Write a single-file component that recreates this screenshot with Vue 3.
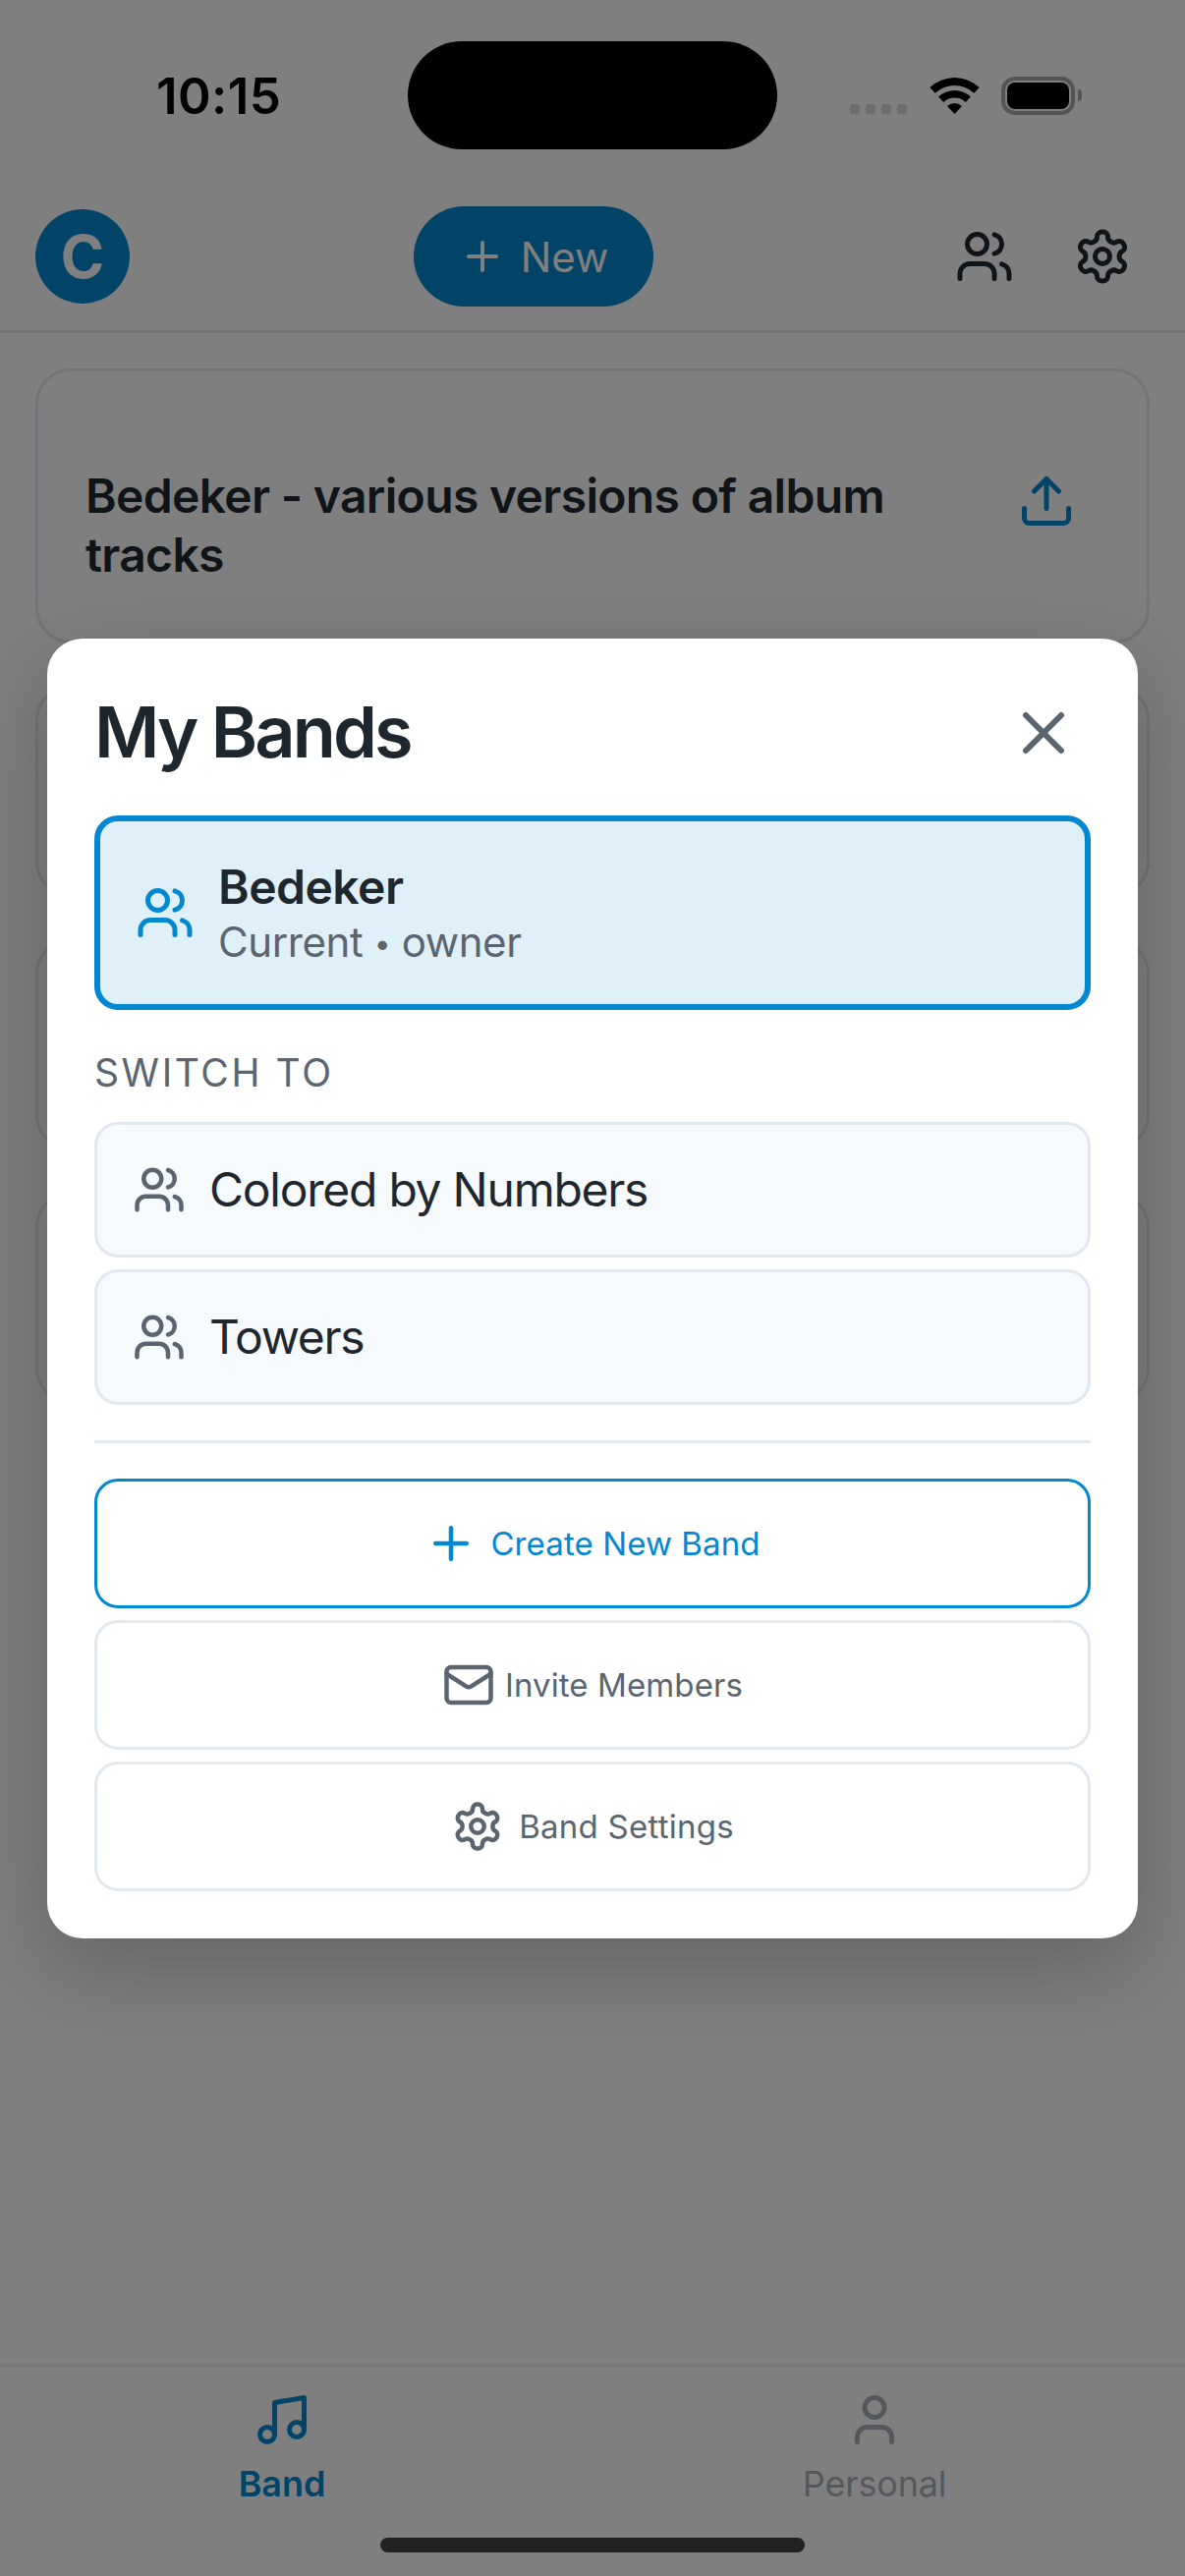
<script setup>
const otherBands = ['Colored by Numbers', 'Towers']
</script>

<template>
  <div class="screen">
    <div class="status-bar">
      <span class="time">10:15</span>
      <div class="island"></div>
      <div class="status-icons">
        <div class="signal">
          <i v-for="n in 4" :key="n"></i>
        </div>
        <svg class="wifi" viewBox="0 0 51 37" fill="#000">
          <path d="M0.3 10A37 37 0 0 1 50.7 10L45.3 15.8A29 29 0 0 0 5.7 15.8Z" />
          <path d="M9.1 19.5A24 24 0 0 1 41.9 19.5L36.75 24.94A16.5 16.5 0 0 0 14.25 24.94Z" />
          <path d="M18 29A11 11 0 0 1 33 29L25.5 37Z" />
        </svg>
        <div class="battery"><div class="battery-level"></div></div>
        <div class="battery-nub"></div>
      </div>
    </div>

    <header class="top-bar">
      <div class="avatar">C</div>
      <button class="new-btn">
        <svg class="icon ic-48" viewBox="0 0 24 24"><path d="M5 12h14" /><path d="M12 5v14" /></svg>
        <span>New</span>
      </button>
      <div class="top-actions">
        <button class="icon-btn">
          <svg class="icon ic-60" viewBox="0 0 24 24">
            <path d="M16 21v-2a4 4 0 0 0-4-4H6a4 4 0 0 0-4 4v2" />
            <circle cx="9" cy="7" r="4" />
            <path d="M22 21v-2a4 4 0 0 0-3-3.87" />
            <path d="M16 3.13a4 4 0 0 1 0 7.75" />
          </svg>
        </button>
        <button class="icon-btn">
          <svg class="icon ic-60" viewBox="0 0 24 24">
            <path d="M12.22 2h-.44a2 2 0 0 0-2 2v.18a2 2 0 0 1-1 1.73l-.43.25a2 2 0 0 1-2 0l-.15-.08a2 2 0 0 0-2.73.73l-.22.38a2 2 0 0 0 .73 2.73l.15.1a2 2 0 0 1 1 1.72v.51a2 2 0 0 1-1 1.74l-.15.09a2 2 0 0 0-.73 2.73l.22.38a2 2 0 0 0 2.73.73l.15-.08a2 2 0 0 1 2 0l.43.25a2 2 0 0 1 1 1.73V20a2 2 0 0 0 2 2h.44a2 2 0 0 0 2-2v-.18a2 2 0 0 1 1-1.73l.43-.25a2 2 0 0 1 2 0l.15.08a2 2 0 0 0 2.73-.73l.22-.39a2 2 0 0 0-.73-2.73l-.15-.08a2 2 0 0 1-1-1.74v-.5a2 2 0 0 1 1-1.74l.15-.09a2 2 0 0 0 .73-2.73l-.22-.38a2 2 0 0 0-2.73-.73l-.15.08a2 2 0 0 1-2 0l-.43-.25a2 2 0 0 1-1-1.73V4a2 2 0 0 0-2-2z" />
            <circle cx="12" cy="12" r="3" />
          </svg>
        </button>
      </div>
    </header>

    <main class="list">
      <div class="card card-first">
        <h2>Bedeker - various versions of album tracks</h2>
        <svg class="icon ic-60 upload" viewBox="0 0 24 24">
          <path d="M21 15v4a2 2 0 0 1-2 2H5a2 2 0 0 1-2-2v-4" />
          <polyline points="17 8 12 3 7 8" />
          <line x1="12" y1="3" x2="12" y2="15" />
        </svg>
      </div>
      <div class="card" v-for="n in 3" :key="n"></div>
    </main>

    <nav class="tab-bar">
      <div class="tab active">
        <svg class="icon ic-60" viewBox="0 0 24 24">
          <path d="M9 18V5l12-2v13" />
          <circle cx="6" cy="18" r="3" />
          <circle cx="18" cy="16" r="3" />
        </svg>
        <span>Band</span>
      </div>
      <div class="tab">
        <svg class="icon ic-60" viewBox="0 0 24 24">
          <path d="M19 21v-2a4 4 0 0 0-4-4H9a4 4 0 0 0-4 4v2" />
          <circle cx="12" cy="7" r="4" />
        </svg>
        <span>Personal</span>
      </div>
    </nav>

    <div class="overlay">
      <div class="modal">
        <div class="modal-head">
          <h1>My Bands</h1>
          <button class="close-btn">
            <svg class="icon ic-72" viewBox="0 0 24 24"><path d="M18 6 6 18" /><path d="m6 6 12 12" /></svg>
          </button>
        </div>

        <div class="current-band">
          <svg class="icon ic-60" viewBox="0 0 24 24">
            <path d="M16 21v-2a4 4 0 0 0-4-4H6a4 4 0 0 0-4 4v2" />
            <circle cx="9" cy="7" r="4" />
            <path d="M22 21v-2a4 4 0 0 0-3-3.87" />
            <path d="M16 3.13a4 4 0 0 1 0 7.75" />
          </svg>
          <div class="current-text">
            <strong>Bedeker</strong>
            <span>Current <b class="dot">•</b> owner</span>
          </div>
        </div>

        <p class="section-label">SWITCH TO</p>

        <div class="band-list">
          <div class="band-row" v-for="band in otherBands" :key="band">
            <svg class="icon ic-54" viewBox="0 0 24 24">
              <path d="M16 21v-2a4 4 0 0 0-4-4H6a4 4 0 0 0-4 4v2" />
              <circle cx="9" cy="7" r="4" />
              <path d="M22 21v-2a4 4 0 0 0-3-3.87" />
              <path d="M16 3.13a4 4 0 0 1 0 7.75" />
            </svg>
            <span>{{ band }}</span>
          </div>
        </div>

        <div class="divider"></div>

        <div class="actions">
          <button class="action primary">
            <svg class="icon ic-54" viewBox="0 0 24 24"><path d="M5 12h14" /><path d="M12 5v14" /></svg>
            <span>Create New Band</span>
          </button>
          <button class="action invite">
            <svg class="icon ic-54" viewBox="0 0 24 24">
              <path d="m22 7-8.97 5.7a1.94 1.94 0 0 1-2.06 0L2 7" />
              <rect x="2" y="4" width="20" height="16" rx="2" />
            </svg>
            <span>Invite Members</span>
          </button>
          <button class="action settings">
            <svg class="icon ic-54" viewBox="0 0 24 24">
              <path d="M12.22 2h-.44a2 2 0 0 0-2 2v.18a2 2 0 0 1-1 1.73l-.43.25a2 2 0 0 1-2 0l-.15-.08a2 2 0 0 0-2.73.73l-.22.38a2 2 0 0 0 .73 2.73l.15.1a2 2 0 0 1 1 1.72v.51a2 2 0 0 1-1 1.74l-.15.09a2 2 0 0 0-.73 2.73l.22.38a2 2 0 0 0 2.73.73l.15-.08a2 2 0 0 1 2 0l.43.25a2 2 0 0 1 1 1.73V20a2 2 0 0 0 2 2h.44a2 2 0 0 0 2-2v-.18a2 2 0 0 1 1-1.73l.43-.25a2 2 0 0 1 2 0l.15.08a2 2 0 0 0 2.73-.73l.22-.39a2 2 0 0 0-.73-2.73l-.15-.08a2 2 0 0 1-1-1.74v-.5a2 2 0 0 1 1-1.74l.15-.09a2 2 0 0 0 .73-2.73l-.22-.38a2 2 0 0 0-2.73-.73l-.15.08a2 2 0 0 1-2 0l-.43-.25a2 2 0 0 1-1-1.73V4a2 2 0 0 0-2-2z" />
              <circle cx="12" cy="12" r="3" />
            </svg>
            <span>Band Settings</span>
          </button>
        </div>
      </div>
    </div>

    <div class="home-indicator"></div>
  </div>
</template>

<style>
html,
body {
  margin: 0;
  background: #808080;
}
</style>

<style scoped>
.screen {
  position: relative;
  width: 1206px;
  height: 2622px;
  overflow: hidden;
  display: flex;
  flex-direction: column;
  background: #fff;
  font-family: Inter, 'Noto Sans', sans-serif;
  color: #1f2933;
}

button {
  border: none;
  background: none;
  padding: 0;
  font-family: inherit;
}

h1,
h2,
p {
  margin: 0;
}

.icon {
  flex-shrink: 0;
  fill: none;
  stroke: currentColor;
  stroke-width: 2;
  stroke-linecap: round;
  stroke-linejoin: round;
}

.ic-48 {
  width: 48px;
  height: 48px;
}

.ic-54 {
  width: 54px;
  height: 54px;
}

.ic-60 {
  width: 60px;
  height: 60px;
}

.ic-72 {
  width: 72px;
  height: 72px;
}

/* status bar sits above the dimming layer */
.status-bar {
  position: relative;
  z-index: 3;
  height: 186px;
  box-sizing: border-box;
  padding-top: 42px;
  display: grid;
  grid-template-columns: 1fr 376px 1fr;
  align-items: start;
}

.time {
  height: 110px;
  padding-left: 159px;
  display: flex;
  align-items: center;
  font-size: 51px;
  font-weight: 600;
  letter-spacing: 0.4px;
  color: #000;
}

.island {
  height: 110px;
  border-radius: 55px;
  background: #000;
}

.status-icons {
  height: 110px;
  padding-left: 74px;
  display: flex;
  align-items: center;
}

.signal {
  display: flex;
  gap: 6px;
  margin-top: 28px;
  margin-right: 23px;
}

.signal i {
  width: 10px;
  height: 10px;
  border-radius: 3px;
  background: #6c6c6c;
}

.wifi {
  width: 51px;
  height: 37px;
  margin-right: 22px;
}

.battery {
  width: 75px;
  height: 39px;
  box-sizing: border-box;
  border: 4px solid #555;
  border-radius: 14px;
  padding: 2px;
}

.battery-level {
  width: 100%;
  height: 100%;
  border-radius: 8px;
  background: #000;
}

.battery-nub {
  width: 4px;
  height: 12px;
  margin-left: 3px;
  border-radius: 0 4px 4px 0;
  background: #555;
}

.top-bar {
  height: 153px;
  box-sizing: border-box;
  padding: 0 36px;
  border-bottom: 3px solid #e5e7eb;
  display: flex;
  align-items: center;
  justify-content: space-between;
}

.avatar {
  width: 96px;
  height: 96px;
  border-radius: 50%;
  background: #0288d1;
  color: #fff;
  font-size: 60px;
  font-weight: 700;
  display: flex;
  align-items: center;
  justify-content: center;
}

.new-btn {
  width: 244px;
  height: 102px;
  border-radius: 51px;
  background: #0288d1;
  color: #fff;
  font-size: 42px;
  font-weight: 400;
  display: flex;
  align-items: center;
  justify-content: center;
  gap: 15px;
}

.top-actions {
  display: flex;
  gap: 24px;
}

.icon-btn {
  width: 96px;
  height: 96px;
  display: flex;
  align-items: center;
  justify-content: center;
  color: #1f2933;
}

.list {
  padding: 36px 36px 0;
  display: flex;
  flex-direction: column;
  gap: 42px;
}

.card {
  box-sizing: border-box;
  min-height: 216px;
  border: 3px solid #e2e8f0;
  border-radius: 36px;
}

.card-first {
  height: 280px;
  padding: 97px 48px 0;
  display: flex;
  justify-content: space-between;
  align-items: flex-start;
}

.card-first h2 {
  width: 850px;
  font-size: 48px;
  line-height: 60px;
  font-weight: 600;
  letter-spacing: -0.67px;
}

.upload {
  margin-right: 24px;
  margin-top: 5px;
  color: #0288d1;
}

.tab-bar {
  margin-top: auto;
  height: 216px;
  box-sizing: border-box;
  padding-top: 24px;
  border-top: 3px solid #f1f1f1;
  display: flex;
  justify-content: space-around;
  align-items: flex-start;
}

.tab {
  display: flex;
  flex-direction: column;
  align-items: center;
  gap: 13px;
  font-size: 36px;
  letter-spacing: -0.2px;
  color: #a9b1ba;
}

.tab.active {
  color: #0288d1;
  font-weight: 600;
  letter-spacing: 0;
}

.overlay {
  position: absolute;
  inset: 0;
  z-index: 2;
  background: rgba(0, 0, 0, 0.5);
  display: flex;
  align-items: center;
  justify-content: center;
}

.modal {
  width: 1110px;
  box-sizing: border-box;
  padding: 48px;
  border-radius: 36px;
  background: #fff;
  box-shadow: 0 30px 90px rgba(0, 0, 0, 0.22);
}

.modal-head {
  display: flex;
  align-items: center;
  justify-content: space-between;
  margin-bottom: 36px;
}

.modal-head h1 {
  padding-bottom: 2px;
  font-size: 72px;
  font-weight: 600;
  letter-spacing: -2.9px;
  color: #1f272e;
}

.close-btn {
  width: 96px;
  height: 96px;
  display: flex;
  align-items: center;
  justify-content: center;
  color: #5b6570;
}

.current-band {
  height: 198px;
  box-sizing: border-box;
  padding: 0 36px;
  border: 6px solid #0288d1;
  border-radius: 24px;
  background: #e0f0f9;
  display: flex;
  align-items: center;
  gap: 24px;
  color: #0288d1;
}

.current-text {
  display: flex;
  flex-direction: column;
  gap: 1px;
}

.current-text strong {
  font-size: 48px;
  font-weight: 600;
  letter-spacing: -0.5px;
  color: #1f272e;
}

.current-text span {
  font-size: 42px;
  letter-spacing: -0.4px;
  color: #5b6570;
}

.dot {
  font-size: 30px;
  font-weight: 400;
  vertical-align: 3px;
}

.section-label {
  margin: 40px 0 27px;
  font-size: 39px;
  line-height: 47px;
  letter-spacing: 2.6px;
  color: #5b6570;
}

.band-list {
  display: flex;
  flex-direction: column;
  gap: 12px;
}

.band-row {
  height: 138px;
  box-sizing: border-box;
  padding: 0 36px;
  border: 3px solid #e2e8f0;
  border-radius: 24px;
  background: #f6fafd;
  display: flex;
  align-items: center;
  gap: 24px;
  font-size: 48px;
  letter-spacing: -1.25px;
  color: #1f272e;
}

.band-row .icon {
  color: #5b6570;
}

.divider {
  height: 3px;
  margin: 36px 0;
  background: #e2e8f0;
}

.actions {
  display: flex;
  flex-direction: column;
  gap: 12px;
}

.action {
  height: 132px;
  box-sizing: border-box;
  border: 3px solid #e2e8f0;
  border-radius: 24px;
  background: #fff;
  display: flex;
  align-items: center;
  justify-content: center;
  gap: 12px;
  font-size: 33px;
  letter-spacing: 0.1px;
  color: #5b6570;
}

.action.primary {
  border-color: #0288d1;
  color: #0288d1;
  gap: 13px;
}

.action.invite {
  gap: 10px;
}

.action.settings {
  gap: 15px;
  letter-spacing: 0.25px;
}

.home-indicator {
  position: absolute;
  z-index: 3;
  left: 387px;
  bottom: 24px;
  width: 432px;
  height: 15px;
  border-radius: 8px;
  background: #222;
}
</style>
